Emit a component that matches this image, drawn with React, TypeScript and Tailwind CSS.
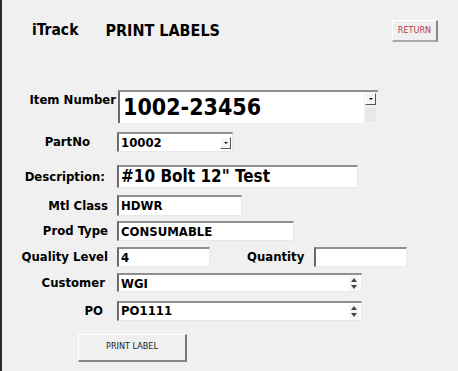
import React from "react";

const F = { fontFamily: '"DejaVu Sans Condensed", "DejaVu Sans", Tahoma, sans-serif' };

function Box({ w, h, children, cls = "" }: { w: number; h: number; children?: React.ReactNode; cls?: string }) {
  return (
    <div
      className={`flex items-center bg-white border-t-2 border-l-2 border-t-[#8f8f8f] border-l-[#6a6a6a] border-r border-b border-r-[#e8e8e8] border-b-[#e8e8e8] pl-[2px] overflow-hidden ${cls}`}
      style={{ width: w, height: h }}
    >
      {children}
    </div>
  );
}

function Spin() {
  return (
    <div className="ml-auto mr-[2px] flex flex-col items-center justify-center w-[10px] h-full bg-[#f7f7f7] gap-[3px]">
      <svg width="6" height="4" viewBox="0 0 6 4"><path d="M0 4 L3 0 L6 4Z" fill="#444" /></svg>
      <svg width="6" height="4" viewBox="0 0 6 4"><path d="M0 0 L3 4 L6 0Z" fill="#444" /></svg>
    </div>
  );
}

function Drop() {
  return (
    <div className="ml-auto mr-[1px] flex items-center justify-center w-[11px] h-[12px] bg-[#f4f4f4] border-r border-b border-[#555] border-t border-l border-t-white border-l-white">
      <svg width="4" height="2" viewBox="0 0 4 2"><path d="M0 0 L2 2 L4 0Z" fill="#111" /></svg>
    </div>
  );
}

function Label({ w, pr, children }: { w: number; pr: number; children: React.ReactNode }) {
  return (
    <div className="text-right text-[13px] font-bold text-black shrink-0" style={{ width: w, paddingRight: pr }}>
      {children}
    </div>
  );
}

export default function App() {
  return (
    <div className="w-[458px] h-[371px] bg-[#f0f0f0] border-l-2 border-[#2a2a2a] overflow-hidden" style={F}>
      {/* header */}
      <div className="flex items-center h-[30px] mt-[16px]">
        <div className="ml-[30px] text-[15.5px] font-bold text-black">iTrack</div>
        <div className="ml-[27px] text-[16px] font-bold text-black">PRINT LABELS</div>
        <div className="ml-auto mr-[20px] w-[46px] h-[22px] flex items-center justify-center bg-[#f0f0f0] border-t border-l border-white border-r-2 border-b-2 border-r-[#888] border-b-[#aaa] text-[9px] text-[#b03a48]">
          RETURN
        </div>
      </div>

      {/* Item Number */}
      <div className="flex items-start mt-[44px]">
        <Label w={116} pr={2}>
          <div className="pt-[0px]">Item Number</div>
        </Label>
        <div className="flex bg-white border-t-2 border-l-2 border-t-[#8f8f8f] border-l-[#6a6a6a] w-[260px] h-[33px]">
          <div className="text-[23px] font-bold text-black leading-none pl-[3px] pt-[4px]">1002-23456</div>
          <div className="ml-auto w-[14px] h-full bg-[#f0f0f0] flex flex-col items-center pt-[1px] pr-[1px]">
            <Drop />
            <div className="mt-[3px] w-[11px] h-[13px] bg-[#e8e8e8]" />
          </div>
        </div>
      </div>

      {/* PartNo */}
      <div className="flex items-center mt-[9px]">
        <Label w={115} pr={27}>PartNo</Label>
        <Box w={116} h={20}>
          <span className="text-[13px] font-bold">10002</span>
          <Drop />
        </Box>
      </div>

      {/* Description */}
      <div className="flex items-center mt-[13px]">
        <Label w={115} pr={12}>Description:</Label>
        <Box w={241} h={23}>
          <span className="text-[17px] font-bold">#10 Bolt 12" Test</span>
        </Box>
      </div>

      {/* Mtl Class */}
      <div className="flex items-center mt-[7px]">
        <Label w={115} pr={9}>Mtl Class</Label>
        <Box w={125} h={21}>
          <span className="text-[13px] font-bold">HDWR</span>
        </Box>
      </div>

      {/* Prod Type */}
      <div className="flex items-center mt-[5px]">
        <Label w={115} pr={9}>Prod Type</Label>
        <Box w={177} h={20}>
          <span className="text-[13px] font-bold">CONSUMABLE</span>
        </Box>
      </div>

      {/* Quality Level / Quantity */}
      <div className="flex items-center mt-[6px]">
        <Label w={115} pr={9}>Quality Level</Label>
        <Box w={93} h={20}>
          <span className="text-[13px] font-bold">4</span>
        </Box>
        <div className="ml-[37px] text-[13px] font-bold">Quantity</div>
        <div className="ml-[10px]">
          <Box w={93} h={20} />
        </div>
      </div>

      {/* Customer */}
      <div className="flex items-center mt-[6px]">
        <Label w={115} pr={12}>Customer</Label>
        <Box w={245} h={19}>
          <span className="text-[13px] font-bold">WGI</span>
          <Spin />
        </Box>
      </div>

      {/* PO */}
      <div className="flex items-center mt-[8px]">
        <Label w={115} pr={14}>PO</Label>
        <Box w={245} h={20}>
          <span className="text-[13px] font-bold">PO1111</span>
          <Spin />
        </Box>
      </div>

      {/* Print label */}
      <div className="flex mt-[13px]">
        <div className="ml-[76px] w-[109px] h-[28px] flex items-center justify-center bg-[#f0f0f0] border-t border-l border-white border-r-2 border-b-2 border-r-[#777] border-b-[#888] text-[9px] text-[#222]">
          PRINT LABEL
        </div>
      </div>
    </div>
  );
}
